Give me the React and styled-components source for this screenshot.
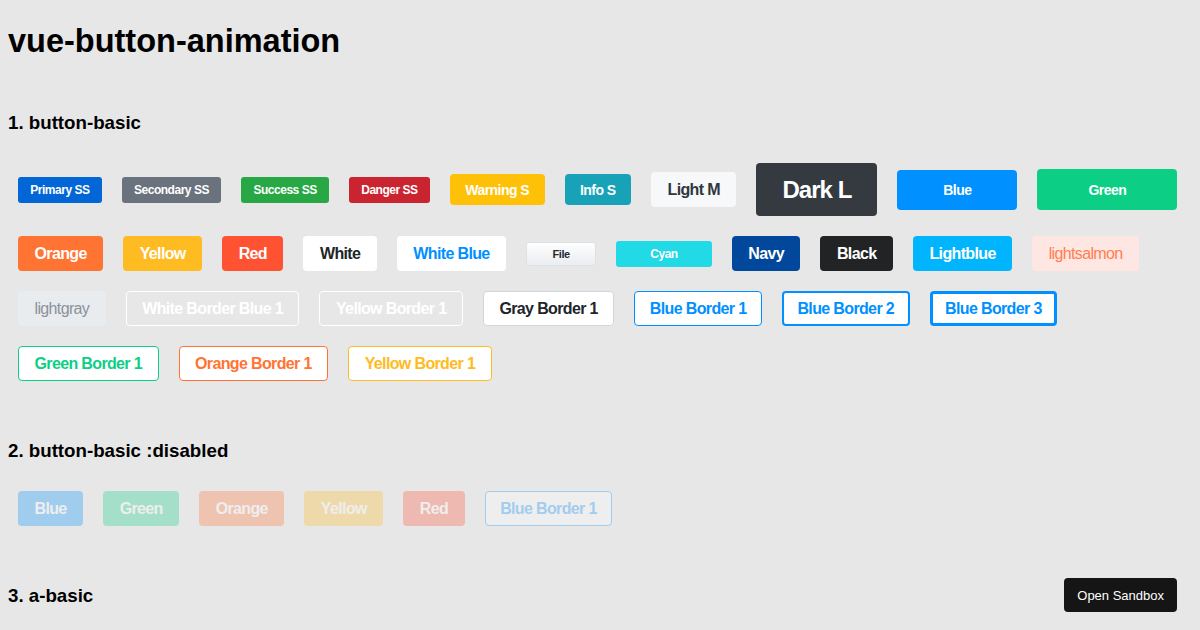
import React from "react";
import styled, { createGlobalStyle, css } from "styled-components";

const GlobalStyle = createGlobalStyle`
  html, body {
    margin: 0;
    background: #e7e7e7;
    font-family: "Liberation Sans", Arial, Helvetica, sans-serif;
    color: #000;
  }
`;

const variants = {
  primary: { bg: "#0366d6", fg: "#fff" },
  secondary: { bg: "#6a737d", fg: "#fff" },
  success: { bg: "#28a745", fg: "#fff" },
  danger: { bg: "#cb2431", fg: "#fff" },
  warning: { bg: "#ffc107", fg: "#fff" },
  info: { bg: "#17a2b8", fg: "#fff" },
  light: { bg: "#f6f8fa", fg: "#30363d" },
  dark: { bg: "#343a40", fg: "#fff" },
  blue: { bg: "#0090ff", fg: "#fff" },
  green: { bg: "#0ccf85", fg: "#fff" },
  orange: { bg: "#ff7433", fg: "#fff" },
  yellow: { bg: "#ffbb22", fg: "#fff" },
  red: { bg: "#ff5233", fg: "#fff" },
  white: { bg: "#fff", fg: "#212529" },
  whiteBlue: { bg: "#fff", fg: "#0090ff" },
  file: { bg: "linear-gradient(#fefefe, #eaedf1)", fg: "#24292e", border: "#dde1e6" },
  cyan: { bg: "#22d9e6", fg: "#fff" },
  navy: { bg: "#01489c", fg: "#fff" },
  black: { bg: "#212325", fg: "#fff" },
  lightblue: { bg: "#00b5fd", fg: "#fff" },
  lightsalmon: { bg: "#fee6e2", fg: "#ff7f50", weight: 400 },
  lightgray: { bg: "#e9ecef", fg: "#8a929b", weight: 400 },
  whiteBorder: { bg: "transparent", fg: "#fff", border: "#fff" },
  grayBorder: { bg: "#fff", fg: "#212529", border: "#d1d5da" },
  blueBorder: { bg: "#fff", fg: "#0090ff", border: "#0090ff", px: 15.5 },
  greenBorder: { bg: "#fff", fg: "#0ccf85", border: "#0ccf85" },
  orangeBorder: { bg: "#fff", fg: "#ff7433", border: "#ff7433" },
  yellowBorder: { bg: "#fff", fg: "#ffbb22", border: "#ffbb22" },
};

const sizes = {
  ss: { fs: 12, h: 26, px: 12.25, r: 3 },
  s: { fs: 14, h: 31, px: 15.5, r: 4 },
  m: { fs: 16, h: 35, px: 16.5, r: 4 },
  l: { fs: 24, h: 53, px: 26, r: 4 },
  file: { fs: 11, h: 24, px: 26.5, r: 3 },
  cyan: { fs: 12, h: 26, px: 34, r: 3 },
  wide: { fs: 14, h: 40, w: 120, r: 4 },
  wider: { fs: 14, h: 41, w: 140, r: 4 },
};

const Page = styled.div`
  padding: 22px 8px 0;
`;

const Title = styled.h1`
  margin: 0;
  font-size: 32.5px;
  line-height: 38px;
  font-weight: 700;
`;

const Section = styled.section`
  margin-top: ${(p) => (p.$first ? 51 : 48)}px;
`;

const SectionTitle = styled.h3`
  margin: 0 0 19px;
  font-size: 18.72px;
  line-height: 23px;
  font-weight: 700;
`;

const ButtonRow = styled.div`
  display: flex;
  align-items: center;
  flex-wrap: nowrap;
`;

const Button = styled.button`
  box-sizing: border-box;
  display: inline-flex;
  align-items: center;
  justify-content: center;
  flex: none;
  margin: 10px;
  font-family: "Liberation Sans", Arial, Helvetica, sans-serif;
  letter-spacing: -0.04em;
  white-space: nowrap;
  cursor: pointer;
  ${({ $variant = "blue", $size = "m", $bw = 1 }) => {
    const v = variants[$variant];
    const s = sizes[$size];
    const px = v.px || s.px;
    return css`
      background: ${v.bg};
      color: ${v.fg};
      font-weight: ${v.weight || 700};
      border: ${$bw}px solid ${v.border || "transparent"};
      border-radius: ${s.r}px;
      font-size: ${s.fs}px;
      height: ${s.h}px;
      ${s.w ? `width: ${s.w}px; padding: 0;` : `padding: 0 ${px - $bw}px;`}
    `;
  }}
  &:disabled {
    opacity: 0.3;
    cursor: not-allowed;
  }
`;

const SandboxButton = styled.button`
  position: fixed;
  right: 23px;
  bottom: 18px;
  height: 34px;
  padding: 0 13px;
  background: #151515;
  color: #fff;
  border: none;
  border-radius: 4px;
  font-family: "Liberation Sans", Arial, Helvetica, sans-serif;
  font-size: 13px;
  cursor: pointer;
`;

const rows = [
  [
    ["primary", "ss", "Primary SS"],
    ["secondary", "ss", "Secondary SS"],
    ["success", "ss", "Success SS"],
    ["danger", "ss", "Danger SS"],
    ["warning", "s", "Warning S"],
    ["info", "s", "Info S"],
    ["light", "m", "Light M"],
    ["dark", "l", "Dark L"],
    ["blue", "wide", "Blue"],
    ["green", "wider", "Green"],
  ],
  [
    ["orange", "m", "Orange"],
    ["yellow", "m", "Yellow"],
    ["red", "m", "Red"],
    ["white", "m", "White"],
    ["whiteBlue", "m", "White Blue"],
    ["file", "file", "File"],
    ["cyan", "cyan", "Cyan"],
    ["navy", "m", "Navy"],
    ["black", "m", "Black"],
    ["lightblue", "m", "Lightblue"],
    ["lightsalmon", "m", "lightsalmon"],
  ],
  [
    ["lightgray", "m", "lightgray"],
    ["whiteBorder", "m", "White Border Blue 1"],
    ["whiteBorder", "m", "Yellow Border 1"],
    ["grayBorder", "m", "Gray Border 1"],
    ["blueBorder", "m", "Blue Border 1", 1],
    ["blueBorder", "m", "Blue Border 2", 2],
    ["blueBorder", "m", "Blue Border 3", 3],
  ],
  [
    ["greenBorder", "m", "Green Border 1"],
    ["orangeBorder", "m", "Orange Border 1"],
    ["yellowBorder", "m", "Yellow Border 1"],
  ],
];

const disabledRow = [
  ["blue", "Blue"],
  ["green", "Green"],
  ["orange", "Orange"],
  ["yellow", "Yellow"],
  ["red", "Red"],
  ["blueBorder", "Blue Border 1"],
];

export default function App() {
  return (
    <>
      <GlobalStyle />
      <Page>
        <Title>vue-button-animation</Title>
        <Section $first>
          <SectionTitle>1. button-basic</SectionTitle>
          {rows.map((row, i) => (
            <ButtonRow key={i}>
              {row.map(([variant, size, label, bw], j) => (
                <Button key={j} $variant={variant} $size={size} $bw={bw || 1}>
                  {label}
                </Button>
              ))}
            </ButtonRow>
          ))}
        </Section>
        <Section>
          <SectionTitle>2. button-basic :disabled</SectionTitle>
          <ButtonRow>
            {disabledRow.map(([variant, label], j) => (
              <Button key={j} $variant={variant} $size="m" disabled>
                {label}
              </Button>
            ))}
          </ButtonRow>
        </Section>
        <Section>
          <SectionTitle>3. a-basic</SectionTitle>
        </Section>
      </Page>
      <SandboxButton>Open Sandbox</SandboxButton>
    </>
  );
}
